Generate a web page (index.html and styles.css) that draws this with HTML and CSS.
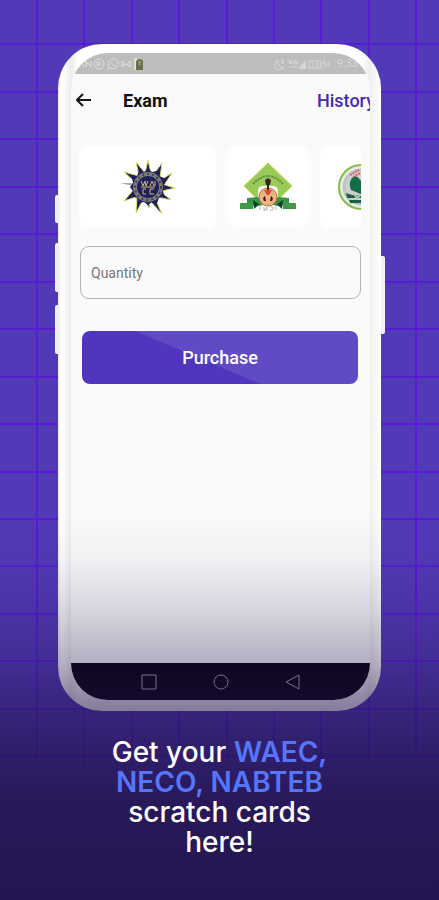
FILE: index.html
```html
<!DOCTYPE html>
<html lang="en">
<head>
<meta charset="utf-8">
<meta name="viewport" content="width=device-width, initial-scale=1">
<title>Exam scratch cards</title>
<link rel="stylesheet" href="styles.css">
</head>
<body>
<main class="promo">
  <svg class="grid" viewBox="0 0 439 900" preserveAspectRatio="xMidYMin slice" aria-hidden="true">
    <path d="M37 0V765M84 0V765M132 0V765M179 0V765M227 0V765M274 0V765M321 0V765M369 0V765M416 0V765"/>
    <path d="M0 44H439M0 92H439M0 139H439M0 187H439M0 234H439M0 282H439M0 329H439M0 377H439M0 424H439M0 472H439M0 519H439M0 566H439M0 614H439M0 661H439M0 709H439M0 756H439"/>
  </svg>

  <section class="phone">
    <span class="key key-mute"></span>
    <span class="key key-up"></span>
    <span class="key key-down"></span>
    <span class="key key-power"></span>
    <div class="screen">
      <div class="status">
        <svg class="status-icons" width="66" height="14" viewBox="0 0 66 14" aria-hidden="true">
          <g fill="none" stroke="#dedede">
            <path d="M2 4l3 6M7 10V4l5 6V4"/>
            <circle cx="20" cy="7" r="5"/><path d="M18 9V5h3v3h-3"/>
            <path d="M29 12l1-3a5 5 0 1 1 2 2zM32 5l3 4 2-1"/>
            <path d="M43 10V4l4 4 4-4v6M43 10l3-3M51 10l-3-3"/>
          </g>
          <path d="M55 1h3v12h-3z" fill="#dde3d2"/>
          <path d="M57 4q4-4 7 0v9h-7z" fill="#66704c"/>
          <path d="M59 4h3v4h-3z" fill="#99885f"/>
        </svg>
        <div class="status-right">
          <svg width="60" height="14" viewBox="0 0 60 14" aria-hidden="true">
            <g fill="none" stroke="#dadada">
              <path d="M5 3a5 5 0 1 0 6 7a5 5 0 0 1-6-7zM8 3h3l-3 3h3"/>
              <path d="M16 3v3h3M18 3v4M24 4h-3v3h3V5M16 9l2 2 2-2 2 2 2-2"/>
              <path d="M36 4h12v7H36zM40 6v3M43 6h2v3h-2"/>
              <path d="M52 3l-2 4h4l-2 4M56 5v4"/>
            </g>
            <path d="M25 12l8-9v9z" fill="#d6d6d6"/>
          </svg>
          <span class="clock">9:33</span>
        </div>
      </div>

      <header class="bar">
        <button class="back" type="button" aria-label="Back">
          <svg width="16" height="14" viewBox="0 0 16 14" aria-hidden="true"><path d="M7 1L1 7l6 6M1 7h14" fill="none" stroke="#161616" stroke-width="2"/></svg>
        </button>
        <h1 class="title">Exam</h1>
        <a class="history" href="#history">History</a>
      </header>

      <div class="boards">
        <button class="board board-wide" type="button" aria-label="WAEC">
          <svg width="58" height="58" viewBox="0 0 58 58" aria-hidden="true">
            <g fill="#20215c" stroke="#d9e36a" stroke-width="1">
              <path d="M26 15L29 2l3 13zM34 17l9-12-2 15zM40 23l13-8-9 14zM43 26l13 4-13 3zM41 33l11 9-14-3zM36 40l7 16-12-13zM31 43l-1 7-4-7zM24 42l-7 13 1-16zM20 38L5 43l11-13zM16 24L5 14l15 4zM20 18L17 4l10 12z"/>
            </g>
            <path d="M1 25h13v3z" fill="#aaa9ae"/>
            <path d="M29 11l4 3 5-1 2 5 5 2-1 5 3 4-3 4 1 5-5 2-2 5-5-1-4 3-4-3-5 1-2-5-5-2 1-5-3-4 3-4-1-5 5-2 2-5 5 1z" fill="#20215c"/>
            <circle cx="29" cy="29" r="13" fill="none" stroke="#7f7d72" stroke-width="4"/>
            <circle cx="29" cy="29" r="13" fill="none" stroke="#3b3a66" stroke-width="2" stroke-dasharray="2 3"/>
            <path d="M22 23l2 5 2-5 1 5 2-5M31 28l2-5 2 5M36 23v5M27 31h-3v5h3M35 31h-4v5h4M22 29h14" fill="none" stroke="#c9bc73"/>
          </svg>
        </button>
        <button class="board board-neco" type="button" aria-label="NECO">
          <svg width="58" height="50" viewBox="0 0 58 50" aria-hidden="true">
            <path d="M29 1l24 23-16 16H21L5 24z" fill="#9aca58" stroke="#c5dc4c"/>
            <path d="M14 22q15-16 30 0" fill="none" stroke="#628a43" stroke-width="2" stroke-dasharray="2 1"/>
            <path d="M19 27q2-4 10-3 8-1 10 3v9H19z" fill="#f5f6ee"/>
            <path d="M8 36l11-1 5 8-9 2-1-3H8zM50 36l-11-1-5 8 9 2 1-3h6z" fill="#389447"/>
            <path d="M1 41h13v6H1zM57 41H44v6h13z" fill="#40994b"/>
            <path d="M14 38l6 4-5 5zM44 38l-6 4 5 5z" fill="#123f2d"/>
            <circle cx="29" cy="35" r="9" fill="#edb480" stroke="#b36e43"/>
            <path d="M26 18l3-2 3 2-1 5h-4zM28 22h2v6h-2z" fill="#37251f"/>
            <path d="M25 28h8l-3 5h-2z" fill="#dd4639"/>
            <path d="M26 34q-3 2-1 5h2zM32 34q3 2 1 5h-2z" fill="#242920"/>
            <path d="M21 44v4M25 45v4l3-4v4M31 45h3v3h-3M37 44v4" fill="none" stroke="#b4b1ac"/>
          </svg>
        </button>
        <button class="board board-nabteb" type="button" aria-label="NABTEB">
          <svg width="48" height="48" viewBox="0 0 48 48" aria-hidden="true">
            <circle cx="24" cy="24" r="22" fill="#e9ebea" stroke="#84bd45" stroke-width="2"/>
            <circle cx="24" cy="24" r="17" fill="#ccd1cf" stroke="#c0c5c3" stroke-width="3"/>
            <path d="M13 12l9-5M16 14l7-4" stroke="#df5960" stroke-width="2" stroke-dasharray="2 1"/>
            <path d="M15 15q5-4 8 2l7 3-4 12-7-3-5-2q-3-7 1-12z" fill="#146b4a"/>
            <path d="M9 30l6 2 11 1v2H10zM12 37h14v3H13z" fill="#17613b"/>
            <path d="M17 31l3 4 5-4" fill="none" stroke="#b8c6bc" stroke-width="2"/>
          </svg>
        </button>
      </div>

      <form class="form">
        <input class="quantity" type="text" inputmode="numeric" placeholder="Quantity" aria-label="Quantity">
        <button class="purchase" type="button">Purchase</button>
      </form>

      <nav class="softkeys" aria-label="System">
        <button class="softkey" type="button" aria-label="Recent apps"><svg width="16" height="16" viewBox="0 0 16 16"><path d="M1 1h14v14H1z"/></svg></button>
        <button class="softkey" type="button" aria-label="Home"><svg width="16" height="16" viewBox="0 0 16 16"><circle cx="8" cy="8" r="7"/></svg></button>
        <button class="softkey" type="button" aria-label="Go back"><svg width="16" height="16" viewBox="0 0 16 16"><path d="M14 1v14L1 8z"/></svg></button>
      </nav>
    </div>
  </section>

  <div class="fade"></div>

  <p class="caption">Get your <strong>WAEC,<br>NECO, NABTEB</strong><br>scratch cards<br>here!</p>
</main>
</body>
</html>
```
FILE: styles.css
```css
* {
  box-sizing: border-box;
}

body {
  margin: 0;
  font-family: Roboto, "Liberation Sans", sans-serif;
}

button {
  padding: 0;
  border: 0;
  background: none;
  font: inherit;
}

svg {
  display: block;
}

.promo {
  position: relative;
  display: flex;
  flex-direction: column;
  min-height: 100vh;
  padding: 44px 58px 43px;
  overflow: hidden;
  background: #5239b7;
}

.grid {
  position: absolute;
  inset: 0;
  width: 100%;
  height: 100%;
  fill: none;
  stroke: #561bd2;
  stroke-width: 2;
}

.phone {
  position: relative;
  display: flex;
  flex: 1;
  padding: 9px 11px 11px 13px;
  border-radius: 44px;
  background: linear-gradient(90deg, #e9e9ec, #fff 3px, #fafafa 7px, #ececec 13px, #fff 20px, #fff calc(100% - 20px), #eee calc(100% - 12px), #fff 100%);
}

.key {
  position: absolute;
  left: -3px;
  width: 3px;
  height: 49px;
  border-radius: 2px 0 0 2px;
  background: #f2f1f8;
}

.key-mute {
  top: 151px;
  height: 28px;
}

.key-up {
  top: 199px;
}

.key-down {
  top: 261px;
}

.key-power {
  top: 212px;
  left: 100%;
  width: 4px;
  height: 78px;
  border-radius: 0 2px 2px 0;
}

.screen {
  display: flex;
  flex: 1;
  flex-direction: column;
  min-width: 0;
  overflow: hidden;
  border-radius: 37px;
  background: #fafafa;
}

.status {
  display: flex;
  align-items: center;
  justify-content: space-between;
  height: 21px;
  padding: 0 12px 0 8px;
  background: #bdbdbd;
}

.status-right {
  display: flex;
  align-items: center;
  gap: 4px;
}

.clock {
  color: #d8d8d8;
  font-size: 11px;
}

.bar {
  display: flex;
  align-items: center;
  height: 52px;
  padding-left: 5px;
}

.back {
  width: 47px;
}

.title {
  flex: 1;
  margin: 0;
  font-size: 18px;
  font-weight: 700;
  color: #111;
}

.history {
  width: 53px;
  overflow: hidden;
  color: #432cab;
  font-size: 18px;
  font-weight: 500;
  text-decoration: none;
}

.boards {
  display: flex;
  gap: 12px;
  margin: 20px 9px 18px 8px;
  overflow: hidden;
}

.board {
  display: flex;
  flex: none;
  align-items: center;
  justify-content: center;
  width: 80px;
  height: 82px;
  border-radius: 10px;
  background: #fff;
  box-shadow: 0 0 6px #fff;
}

.board-wide {
  width: 137px;
}

.board-nabteb {
  width: 82px;
}

.form {
  display: flex;
  flex: 1;
  flex-direction: column;
  padding: 0 9px;
}

.quantity {
  width: 100%;
  height: 53px;
  padding: 0 10px;
  border: 1px solid #b5b5b5;
  border-radius: 9px;
  background: #fafafa;
  color: #333;
  font-family: inherit;
  font-size: 14px;
}

.quantity::placeholder {
  color: #777;
  opacity: 1;
}

.purchase {
  height: 53px;
  margin: 32px 3px 0 2px;
  border-radius: 8px;
  background: linear-gradient(23deg, #5036bc 44%, #614bc4 45%);
  color: #fff;
  font-size: 18px;
  font-weight: 500;
}

.softkeys {
  display: flex;
  align-items: center;
  justify-content: center;
  gap: 56px;
  height: 37px;
  background: #04000a;
}

.softkey svg {
  fill: none;
  stroke: #b5b0bf;
}

.fade {
  position: absolute;
  inset: 0;
  background: linear-gradient(
    rgb(34 20 76 / 0) 57%,
    rgb(34 20 76 / .04) 62%,
    rgb(34 20 76 / .14) 67%,
    rgb(34 20 76 / .32) 73.5%,
    rgb(34 20 76 / .52) 78%,
    rgb(34 20 76 / .7) 83%,
    rgb(34 20 76 / .87) 89%,
    rgb(34 20 76 / .96) 100%
  );
  pointer-events: none;
}

.caption {
  position: relative;
  margin: 26px 0 0;
  color: #fff;
  font-family: Inter, Lato, sans-serif;
  font-size: 28px;
  font-weight: 500;
  line-height: 30px;
  text-align: center;
}

.caption strong {
  color: #5576f8;
  font-weight: 600;
}
```
